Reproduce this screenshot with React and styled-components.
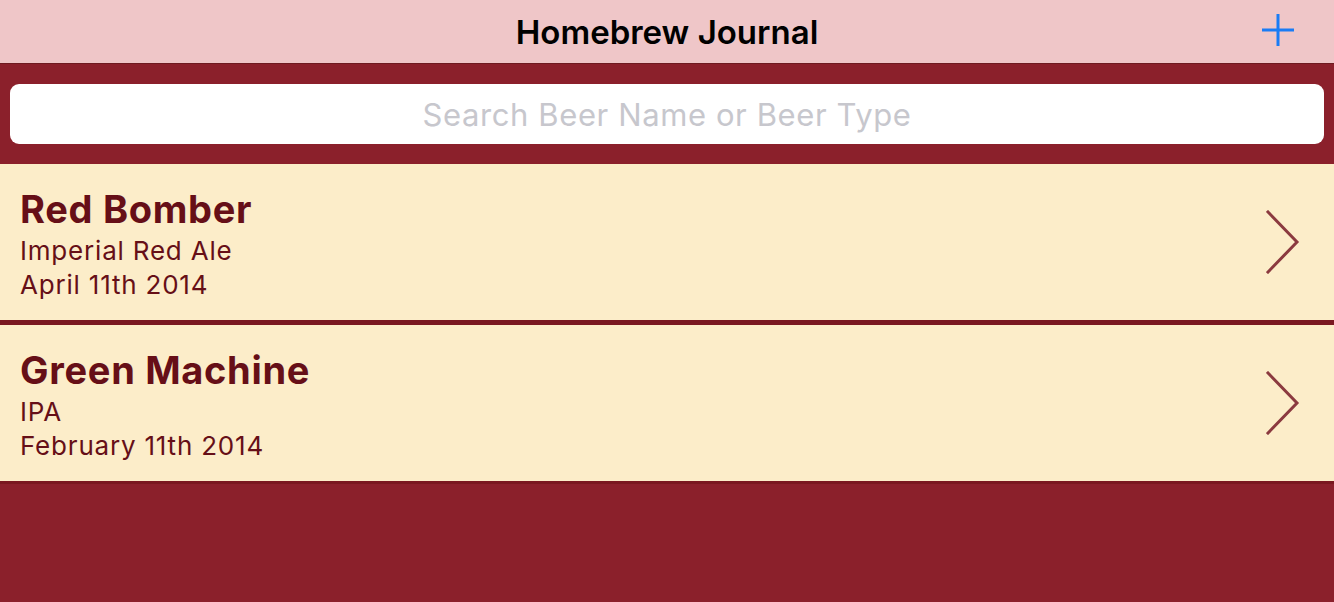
import React from 'react'
import styled, { createGlobalStyle } from 'styled-components'

const beers = [
  { name: 'Red Bomber', type: 'Imperial Red Ale', date: 'April 11th 2014' },
  { name: 'Green Machine', type: 'IPA', date: 'February 11th 2014' }
]

const GlobalStyle = createGlobalStyle`
  html, body {
    margin: 0;
    padding: 0;
    background: #8b202b;
    font-family: Inter, "Noto Sans", sans-serif;
  }
`

const Page = styled.div`
  width: 1334px;
  height: 602px;
  background: #8b202b;
  overflow: hidden;
`

const NavBar = styled.div`
  height: 63px;
  background: #efc6c8;
  border-bottom: 1px solid #6e1a20;
  display: flex;
  align-items: center;
  justify-content: center;
  position: relative;
`

const Title = styled.h1`
  margin: 0;
  font-size: 33px;
  font-weight: 600;
  color: #000;
`

const AddButton = styled.button`
  position: absolute;
  right: 40px;
  top: 14px;
  width: 32px;
  height: 32px;
  padding: 0;
  border: 0;
  background: none;
  display: flex;
`

const SearchWrap = styled.div`
  padding: 20px 10px;
`

const SearchBox = styled.input`
  box-sizing: border-box;
  width: 100%;
  height: 60px;
  border: 0;
  border-radius: 9px;
  background: #fff;
  text-align: center;
  font-family: Inter, "Noto Sans", sans-serif;
  font-size: 31px;
  letter-spacing: 0.6px;
  outline: none;

  &::placeholder {
    color: #c7c7cd;
  }
`

const List = styled.div`
  display: flex;
  flex-direction: column;
`

const Row = styled.div`
  height: 156px;
  background: #fcedc9;
  border-bottom: ${p => (p.last ? '3px' : '5px')} solid #7a1820;
  display: flex;
  align-items: center;
  justify-content: space-between;
  padding: 0 34px 0 20px;
`

const Info = styled.div`
  display: flex;
  flex-direction: column;
  padding-top: 4px;
  color: #660f17;
`

const Name = styled.div`
  font-size: 38px;
  font-weight: 700;
  letter-spacing: 0.7px;
  line-height: 44px;
  margin-bottom: 3px;
`

const Detail = styled.div`
  font-size: 26px;
  letter-spacing: 0.8px;
  line-height: 34px;
`

const Plus = () => (
  <svg width="32" height="32" viewBox="0 0 32 32">
    <path d="M16 0 V32 M0 16 H32" stroke="#1a7cf5" strokeWidth="3" />
  </svg>
)

const Chevron = () => (
  <svg width="34" height="64" viewBox="0 0 34 64">
    <path d="M2 2 L31 32 L2 62" fill="none" stroke="#8b3a3f" strokeWidth="3" strokeLinecap="square" />
  </svg>
)

export default function App () {
  return (
    <Page>
      <GlobalStyle />
      <NavBar>
        <Title>Homebrew Journal</Title>
        <AddButton><Plus /></AddButton>
      </NavBar>

      <SearchWrap>
        <SearchBox placeholder='Search Beer Name or Beer Type' />
      </SearchWrap>

      <List>
        {beers.map((beer, i) => (
          <Row key={beer.name} last={i === beers.length - 1}>
            <Info>
              <Name>{beer.name}</Name>
              <Detail>{beer.type}</Detail>
              <Detail>{beer.date}</Detail>
            </Info>
            <Chevron />
          </Row>
        ))}
      </List>
    </Page>
  )
}
